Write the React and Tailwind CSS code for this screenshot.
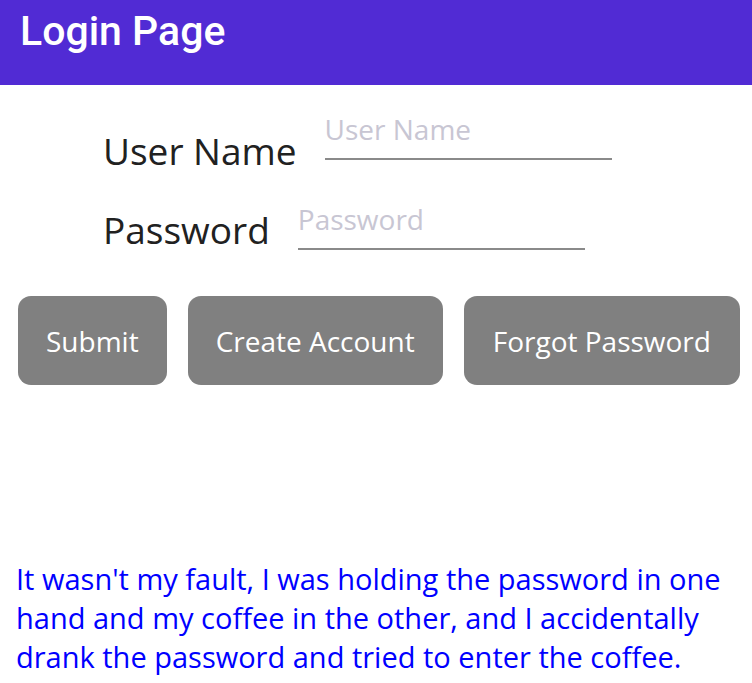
export default function App() {
    const entry = "border-b-2 border-[#8a8a8a] pb-[10px] text-[28px] leading-[38px] text-[#c8c6d3]";

    return (
        <div className="w-[752px] h-[683px] bg-white overflow-hidden font-['Open_Sans',sans-serif]">
            {/* header */}
            <div className="h-[85px] bg-[#512bd4] px-[20px] pt-[7px]">
                <h1 className="font-['Roboto',sans-serif] font-medium text-[41px] leading-[48px] text-white">Login Page</h1>
            </div>

            {/* form */}
            <div className="pl-[103px]">
                <div className="flex items-start mt-[25px]">
                    <span className="mt-[16px] text-[37px] leading-[50px] text-[#212121]">User Name</span>
                    <div className={"ml-[28px] w-[287px] " + entry}>User Name</div>
                </div>
                <div className="flex items-start mt-[24px]">
                    <span className="mt-[5px] text-[37px] leading-[50px] text-[#212121]">Password</span>
                    <div className={"ml-[28px] w-[287px] " + entry}>Password</div>
                </div>
            </div>

            {/* buttons */}
            <div className="flex gap-[21px] pl-[18px] mt-[41px]">
                <button className="h-[89px] px-[28px] rounded-[13px] bg-[#808080] text-white text-[28px]">Submit</button>
                <button className="h-[89px] px-[28px] rounded-[13px] bg-[#808080] text-white text-[28px]">Create Account</button>
                <button className="h-[89px] px-[29px] rounded-[13px] bg-[#808080] text-white text-[28px]">Forgot Password</button>
            </div>

            <p className="mt-[174px] px-4 text-[29px] leading-[39px] text-[#0000ff]">
                It wasn't my fault, I was holding the password in one hand and my coffee in the other, and I accidentally drank the password and tried to enter the coffee.
            </p>
        </div>
    );
}
